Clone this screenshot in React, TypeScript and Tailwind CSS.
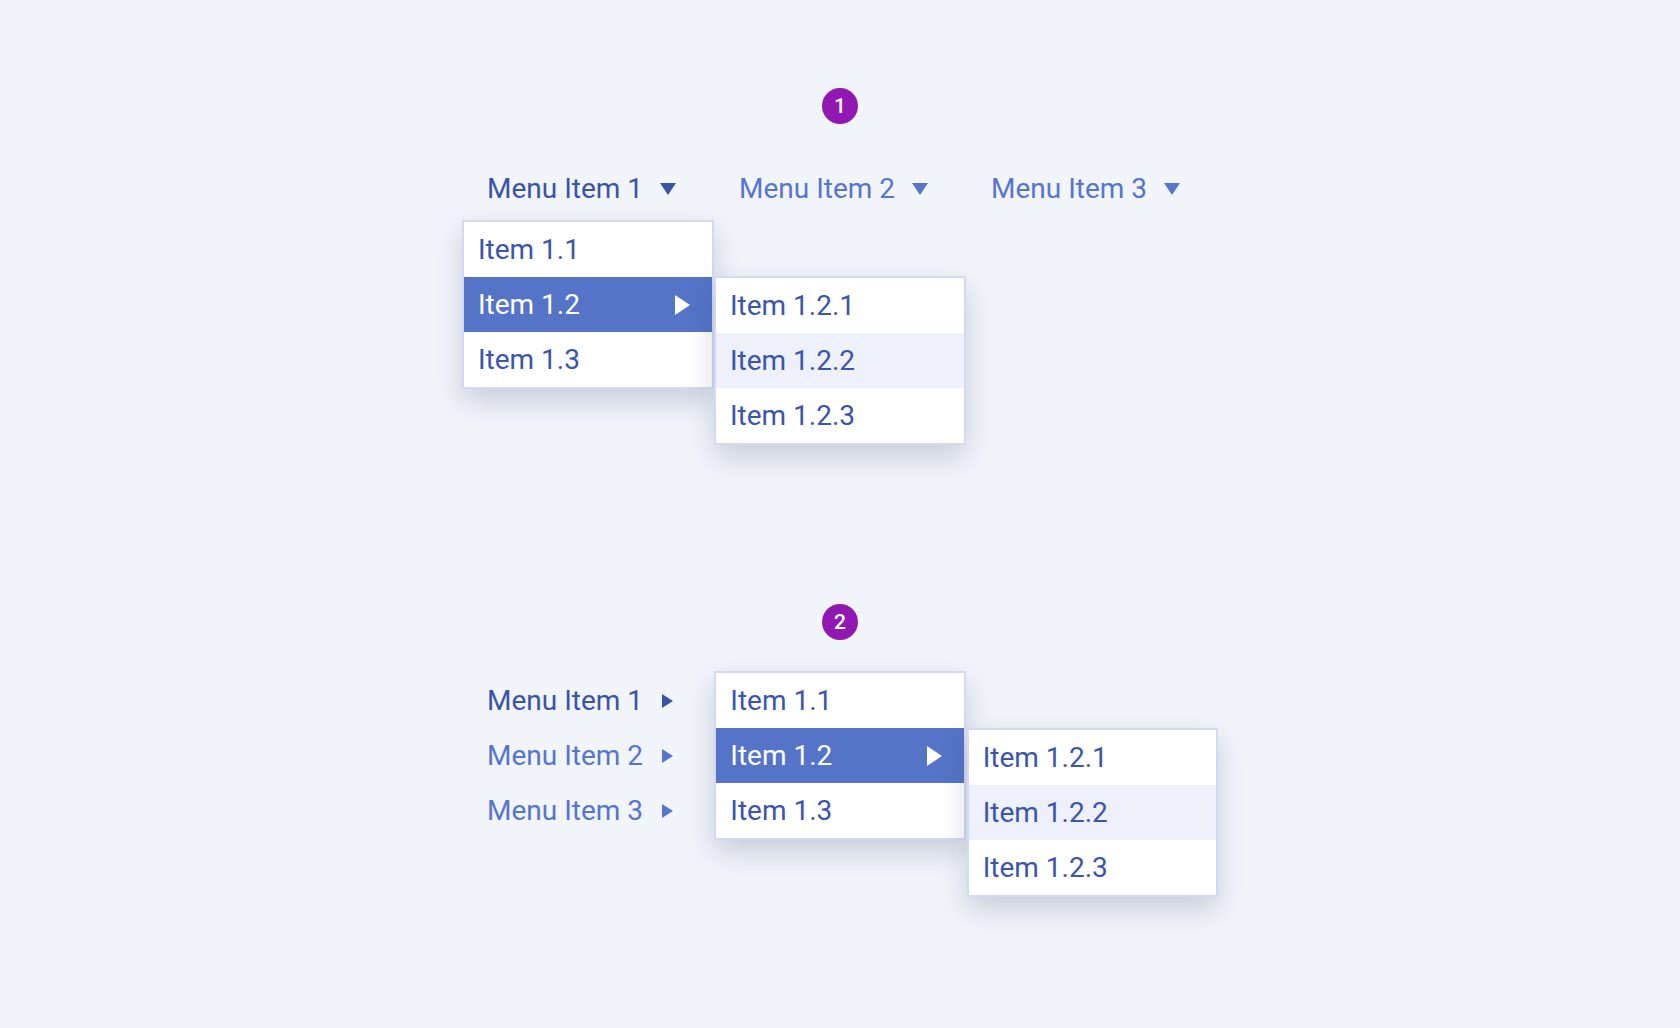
import React from 'react';

interface MenuRow {
  label: string;
  active?: boolean;
  hover?: boolean;
  hasChildren?: boolean;
}

const firstLevel: MenuRow[] = [
  { label: 'Item 1.1' },
  { label: 'Item 1.2', active: true, hasChildren: true },
  { label: 'Item 1.3' },
];

const secondLevel: MenuRow[] = [
  { label: 'Item 1.2.1' },
  { label: 'Item 1.2.2', hover: true },
  { label: 'Item 1.2.3' },
];

const topItems = ['Menu Item 1', 'Menu Item 2', 'Menu Item 3'];

const CaretDown = () => (
  <svg width="16" height="12" viewBox="0 0 16 12" className="shrink-0">
    <path d="M0 0H16L8 12Z" fill="currentColor" />
  </svg>
);

const CaretRight = ({ w, h }: { w: number; h: number }) => (
  <svg width={w} height={h} viewBox={`0 0 ${w} ${h}`} className="shrink-0">
    <path d={`M0 0L${w} ${h / 2}L0 ${h}Z`} fill="currentColor" />
  </svg>
);

const Badge: React.FC<{ n: number; className?: string }> = ({ n, className }) => (
  <div
    className={`flex h-[36px] w-[36px] items-center justify-center rounded-full bg-[#9118b1] text-[21px] font-medium leading-none text-white ${className ?? ''}`}
  >
    {n}
  </div>
);

const Dropdown: React.FC<{ rows: MenuRow[]; className?: string }> = ({ rows, className }) => (
  <ul
    className={`w-[252px] border-2 border-[#d3daef] bg-white shadow-[0_12px_26px_rgba(40,55,100,0.2)] ${className ?? ''}`}
  >
    {rows.map((row) => (
      <li
        key={row.label}
        className={`flex h-[55px] items-center justify-between pl-[14px] pr-[22px] text-[28px] ${
          row.active
            ? 'bg-[#5574c7] text-white'
            : row.hover
              ? 'bg-[#eef1fb] text-[#3a55ab]'
              : 'text-[#3a55ab]'
        }`}
      >
        <span>{row.label}</span>
        {row.hasChildren && <CaretRight w={15} h={20} />}
      </li>
    ))}
  </ul>
);

export default function App() {
  return (
    <div className="min-h-screen bg-[#f1f4f9] font-['Roboto',sans-serif]">
      <div className="flex flex-col items-center pt-[88px]">
        <Badge n={1} />

        {/* horizontal menu with dropdown */}
        <section className="mt-[38px] w-[756px]">
          <nav className="flex h-[54px]">
            {topItems.map((label, i) => (
              <div
                key={label}
                className={`flex w-[252px] items-center gap-[17px] pl-[25px] text-[28px] ${
                  i === 0 ? 'text-[#3953a9]' : 'text-[#5775cc]'
                }`}
              >
                <span>{label}</span>
                <CaretDown />
              </div>
            ))}
          </nav>
          <div className="mt-[4px] flex items-start">
            <Dropdown rows={firstLevel} />
            <Dropdown rows={secondLevel} className="relative z-10 mt-[56px]" />
          </div>
        </section>

        <Badge n={2} className="mt-[159px]" />

        {/* vertical menu with flyouts */}
        <section className="mt-[31px] flex w-[756px] items-start">
          <div className="w-[252px] pt-[2px]">
            {topItems.map((label, i) => (
              <div
                key={label}
                className={`flex h-[55px] items-center gap-[19px] pl-[25px] text-[28px] ${
                  i === 0 ? 'text-[#3953a9]' : 'text-[#5775cc]'
                }`}
              >
                <span>{label}</span>
                <CaretRight w={11} h={14} />
              </div>
            ))}
          </div>
          <Dropdown rows={firstLevel} className="ml-px" />
          <Dropdown rows={secondLevel} className="relative z-10 ml-px mt-[57px]" />
        </section>
      </div>
    </div>
  );
}
